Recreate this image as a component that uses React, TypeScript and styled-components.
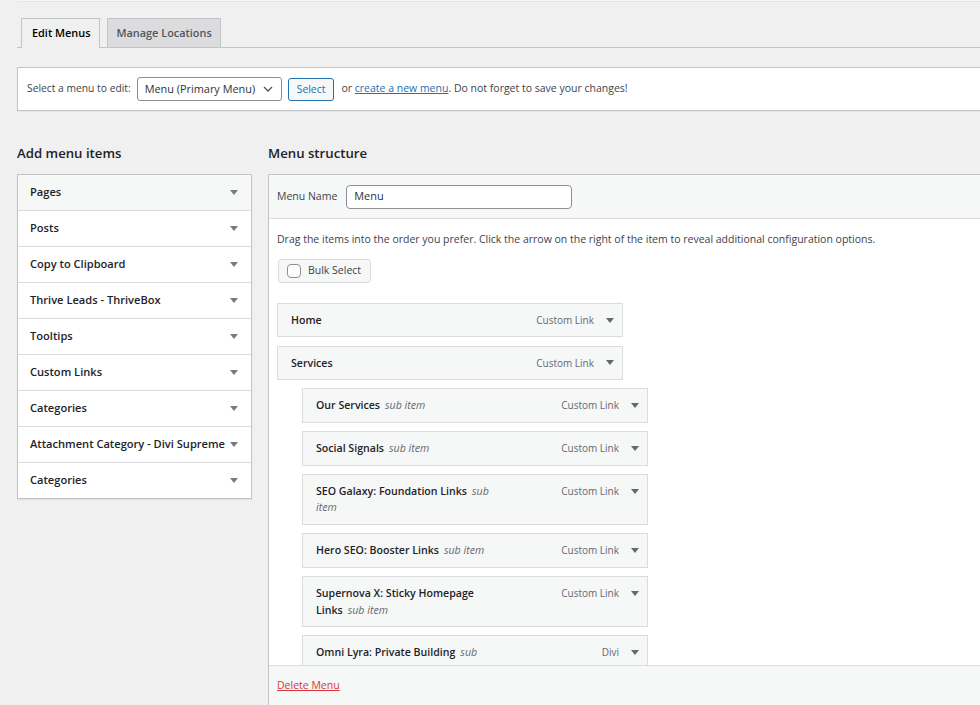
import React from 'react'
import styled, { createGlobalStyle } from 'styled-components'

const GlobalStyle = createGlobalStyle`
  html, body {
    margin: 0;
    padding: 0;
  }
  body {
    height: 705px;
    overflow: hidden;
    background: #f0f0f1;
    color: #1d2327;
    font-family: "Open Sans", "Noto Sans", sans-serif;
    font-size: 10.5px;
    line-height: 1.5;
  }
  * {
    box-sizing: border-box;
  }
`

const Page = styled.div`
  width: 1010px;
  padding-left: 17px;
`

const TopEdge = styled.div`
  height: 2px;
  background: #f6f7f7;
  border-bottom: 1px solid #e4e4e6;
`

const TabBar = styled.nav`
  display: flex;
  align-items: flex-end;
  gap: 7px;
  margin-top: 16px;
  padding-left: 4px;
  border-bottom: 1px solid #c3c4c7;
`

const Tab = styled.a<{ $active?: boolean }>`
  display: block;
  height: ${({ $active }) => ($active ? '30px' : '29px')};
  margin-bottom: ${({ $active }) => ($active ? '-1px' : '0')};
  padding: ${({ $active }) => ($active ? '0 9px 0 10px' : '0 8px')};
  line-height: 28px;
  border: 1px solid #c3c4c7;
  border-bottom: none;
  background: ${({ $active }) => ($active ? '#f0f0f1' : '#dcdcde')};
  color: ${({ $active }) => ($active ? '#000' : '#50575e')};
  font-size: 10.9px;
  font-weight: 600;
  text-decoration: none;
`

const ManageBar = styled.div`
  display: flex;
  align-items: center;
  height: 44px;
  margin-top: 19px;
  padding: 0 9px;
  background: #fff;
  border: 1px solid #c3c4c7;
  box-shadow: 0 1px 1px rgba(0, 0, 0, 0.04);
  color: #3c434a;
`

const SelectLabel = styled.span`
  margin-right: 6px;
  font-size: 10.3px;
`

const MenuSelect = styled.div`
  display: flex;
  align-items: center;
  justify-content: space-between;
  width: 145px;
  height: 24px;
  padding: 0 8px 0 7px;
  border: 1px solid #8c8f94;
  border-radius: 3px;
  background: #fff;
  color: #2c3338;
  font-size: 10.9px;
  white-space: nowrap;
`

const SelectButton = styled.button`
  height: 23px;
  margin-left: 6px;
  padding: 0 8px;
  border: 1px solid #2271b1;
  border-radius: 3px;
  background: #f6f7f7;
  color: #2271b1;
  font-family: inherit;
  font-size: 10.4px;
`

const Note = styled.span`
  margin-left: 7px;
  color: #3c434a;

  a {
    color: #2271b1;
    text-decoration: underline;
  }
`

const Columns = styled.div`
  display: flex;
  align-items: flex-start;
  gap: 16px;
  margin-top: 32px;
`

const SideColumn = styled.div`
  flex: 0 0 235px;
  width: 235px;
  min-width: 0;
`

const MainColumn = styled.div`
  flex: 1;
  min-width: 0;
`

const Heading = styled.h2`
  margin: 0 0 11px;
  font-size: 13.2px;
  font-weight: 600;
  line-height: 20px;
  color: #1d2327;
`

const Accordion = styled.div`
  background: #fff;
  border: 1px solid #c3c4c7;
  box-shadow: 0 1px 1px rgba(0, 0, 0, 0.06);
`

const AccordionRow = styled.div<{ $open?: boolean }>`
  display: flex;
  align-items: center;
  justify-content: space-between;
  height: 36px;
  padding: 0 13px 0 12px;
  border-top: 1px solid #dcdcde;
  background: ${({ $open }) => ($open ? '#f6f7f7' : '#fff')};
  font-size: 11.1px;
  font-weight: 600;
  color: #1d2327;
  white-space: nowrap;

  &:first-child {
    height: 35px;
    border-top: none;
  }
`

const Panel = styled.div`
  display: flex;
  flex-direction: column;
  height: 531px;
  border: 1px solid #c3c4c7;
  border-bottom: none;
  background: #fff;
`

const PanelHeader = styled.div`
  display: flex;
  align-items: center;
  flex: 0 0 44px;
  padding: 0 8px;
  background: #f6f7f7;
  border-bottom: 1px solid #dcdcde;
`

const NameLabel = styled.label`
  margin-right: 9px;
  color: #3c434a;
`

const NameInput = styled.div`
  display: flex;
  align-items: center;
  width: 226px;
  height: 24px;
  padding: 0 7px;
  border: 1px solid #8c8f94;
  border-radius: 4px;
  background: #fff;
  color: #2c3338;
  font-size: 10.9px;
`

const PanelBody = styled.div`
  flex: 1;
  min-height: 0;
  overflow: hidden;
  padding: 13px 8px 0;
`

const Instructions = styled.p`
  margin: 0 0 11px;
  color: #3c434a;
`

const BulkButton = styled.div`
  display: flex;
  align-items: center;
  gap: 7px;
  width: fit-content;
  height: 24px;
  margin-left: 1px;
  padding: 0 9px 0 8px;
  border: 1px solid #dcdcde;
  border-radius: 3px;
  background: #f6f7f7;
  color: #3c434a;
`

const Checkbox = styled.span`
  width: 14px;
  height: 14px;
  border: 1px solid #8c8f94;
  border-radius: 4px;
  background: #fff;
`

const ItemList = styled.ul`
  margin: 20px 0 0;
  padding: 0;
  list-style: none;
`

const Item = styled.li<{ $depth: number }>`
  display: flex;
  align-items: flex-start;
  justify-content: space-between;
  width: 346px;
  margin: 0 0 8.3px ${({ $depth }) => $depth * 25}px;
  padding: 8px 8px 8px 13px;
  border: 1px solid #dcdcde;
  background: #f6f7f7;
  line-height: 16.5px;
`

const ItemTitle = styled.span`
  max-width: 184px;
  font-size: 10.6px;
  font-weight: 600;
  color: #1d2327;
`

const SubItem = styled.span`
  margin-left: 5px;
  font-weight: 400;
  font-style: italic;
  color: #646970;
`

const ItemControls = styled.span`
  display: flex;
  align-items: center;
  gap: 12px;
  height: 16.5px;
  color: #646970;
  font-size: 10px;
  white-space: nowrap;
`

const PanelFooter = styled.div`
  display: flex;
  align-items: center;
  flex: 0 0 40px;
  padding: 0 8px;
  background: #f6f7f7;
  border-top: 1px solid #dcdcde;

  a {
    color: #d63638;
    text-decoration: underline;
  }
`

const Triangle = ({ color = '#787c82' }: { color?: string }) => (
  <svg width="8" height="5" viewBox="0 0 8 5" style={{ flexShrink: 0 }}>
    <path d="M0 0h8L4 5z" fill={color} />
  </svg>
)

const Chevron = () => (
  <svg width="10" height="6" viewBox="0 0 10 6" style={{ flexShrink: 0 }}>
    <path d="M1 1l4 4 4-4" fill="none" stroke="#50575e" strokeWidth="1.3" />
  </svg>
)

const sections = [
  'Pages',
  'Posts',
  'Copy to Clipboard',
  'Thrive Leads - ThriveBox',
  'Tooltips',
  'Custom Links',
  'Categories',
  'Attachment Category - Divi Supreme',
  'Categories',
]

type MenuItem = { title: string; type: string; depth: number }

const items: MenuItem[] = [
  { title: 'Home', type: 'Custom Link', depth: 0 },
  { title: 'Services', type: 'Custom Link', depth: 0 },
  { title: 'Our Services', type: 'Custom Link', depth: 1 },
  { title: 'Social Signals', type: 'Custom Link', depth: 1 },
  { title: 'SEO Galaxy: Foundation Links', type: 'Custom Link', depth: 1 },
  { title: 'Hero SEO: Booster Links', type: 'Custom Link', depth: 1 },
  { title: 'Supernova X: Sticky Homepage Links', type: 'Custom Link', depth: 1 },
  { title: 'Omni Lyra: Private Building', type: 'Divi', depth: 1 },
]

export default function App() {
  return (
    <>
      <GlobalStyle />
      <Page>
        <TopEdge />
        <TabBar>
          <Tab $active>Edit Menus</Tab>
          <Tab>Manage Locations</Tab>
        </TabBar>

        <ManageBar>
          <SelectLabel>Select a menu to edit:</SelectLabel>
          <MenuSelect>
            Menu (Primary Menu)
            <Chevron />
          </MenuSelect>
          <SelectButton>Select</SelectButton>
          <Note>
            or <a href="#">create a new menu</a>. Do not forget to save your
            changes!
          </Note>
        </ManageBar>

        <Columns>
          <SideColumn>
            <Heading>Add menu items</Heading>
            <Accordion>
              {sections.map((s, i) => (
                <AccordionRow key={i} $open={i === 0}>
                  {s}
                  <Triangle />
                </AccordionRow>
              ))}
            </Accordion>
          </SideColumn>

          <MainColumn>
            <Heading>Menu structure</Heading>
            <Panel>
              <PanelHeader>
                <NameLabel>Menu Name</NameLabel>
                <NameInput>Menu</NameInput>
              </PanelHeader>
              <PanelBody>
                <Instructions>
                  Drag the items into the order you prefer. Click the arrow on
                  the right of the item to reveal additional configuration
                  options.
                </Instructions>
                <BulkButton>
                  <Checkbox />
                  Bulk Select
                </BulkButton>
                <ItemList>
                  {items.map((it) => (
                    <Item key={it.title} $depth={it.depth}>
                      <ItemTitle>
                        {it.title}
                        {it.depth > 0 && <SubItem>sub item</SubItem>}
                      </ItemTitle>
                      <ItemControls>
                        {it.type}
                        <Triangle color="#646970" />
                      </ItemControls>
                    </Item>
                  ))}
                </ItemList>
              </PanelBody>
              <PanelFooter>
                <a href="#">Delete Menu</a>
              </PanelFooter>
            </Panel>
          </MainColumn>
        </Columns>
      </Page>
    </>
  )
}
